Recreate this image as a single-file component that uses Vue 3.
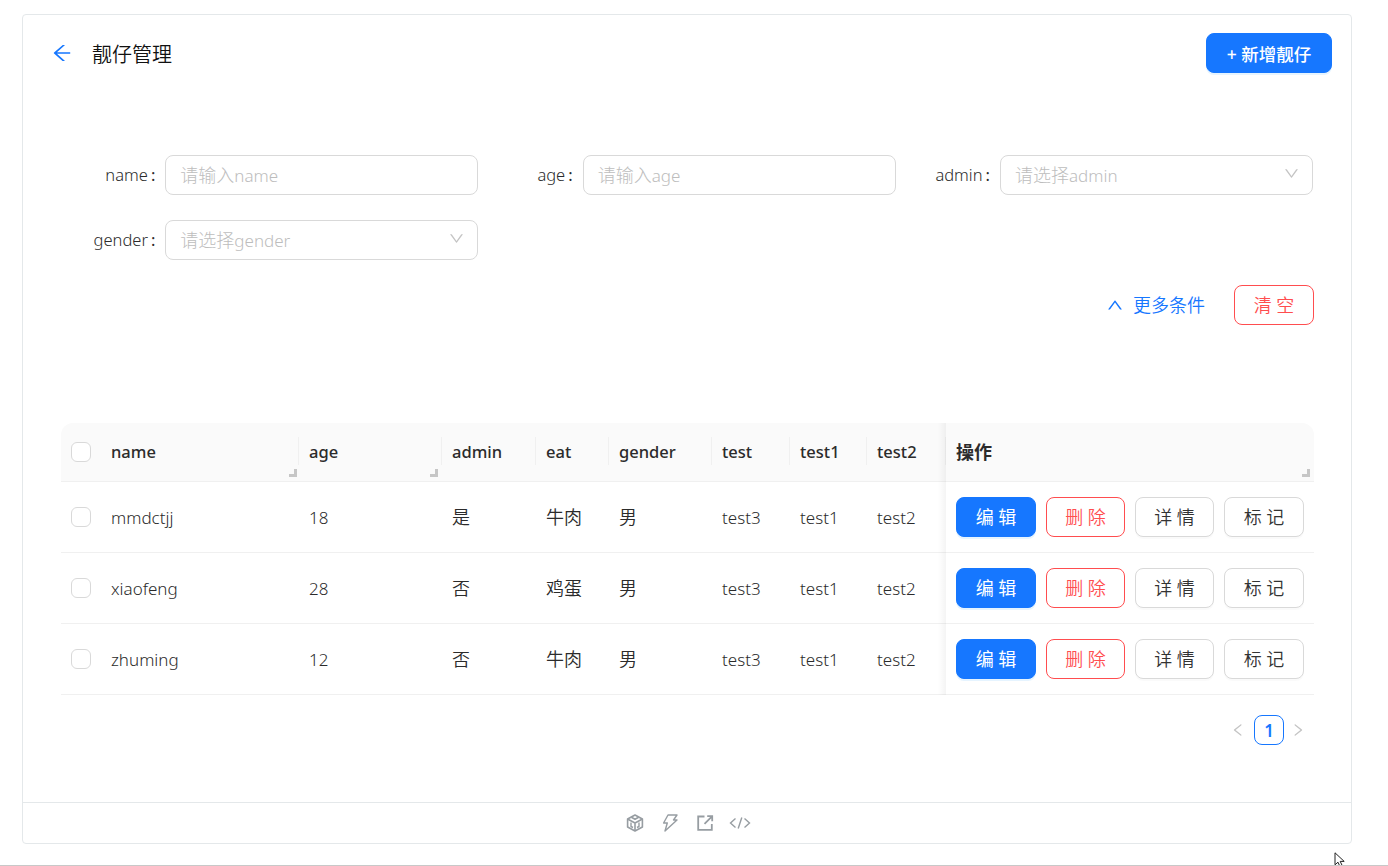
<script setup>
const columns = ['name', 'age', 'admin', 'eat', 'gender', 'test', 'test1', 'test2']
const rows = [
  ['mmdctjj', '18', '是', '牛肉', '男', 'test3', 'test1', 'test2'],
  ['xiaofeng', '28', '否', '鸡蛋', '男', 'test3', 'test1', 'test2'],
  ['zhuming', '12', '否', '牛肉', '男', 'test3', 'test1', 'test2']
]
const fields = [
  { label: 'name', verb: '请输入', word: 'name' },
  { label: 'age', verb: '请输入', word: 'age' },
  { label: 'admin', verb: '请选择', word: 'admin', select: true },
  { label: 'gender', verb: '请选择', word: 'gender', select: true }
]
const isCjk = (v) => /[\u4e00-\u9fff]/.test(v)
const downPath = 'M884 256h-75c-5.1 0-9.9 2.5-12.9 6.6L512 654.2 227.9 262.6c-3-4.1-7.8-6.6-12.9-6.6h-75c-6.5 0-10.3 7.4-6.5 12.7l352.6 486.1c12.8 17.6 39 17.6 51.7 0l352.6-486.1c3.9-5.3.1-12.7-6.4-12.7z'
</script>

<template>
  <div class="page">
    <div class="card">
      <div class="card-body">
        <header class="head">
          <div class="title">
            <svg class="back" viewBox="64 64 896 896" fill="currentColor"><path d="M872 474H286.9l350.2-304c5.6-4.9 2.2-14-5.2-14h-88.5c-3.9 0-7.6 1.4-10.5 3.9L155 487.8a31.96 31.96 0 0 0 0 48.3L535.1 866c1.5 1.3 3.3 2 5.2 2h91.5c7.4 0 10.8-9.2 5.2-14L286.9 550H872c4.4 0 8-3.6 8-8v-60c0-4.4-3.6-8-8-8z"/></svg>
            <span>靓仔管理</span>
          </div>
          <button class="btn primary add">+ 新增靓仔</button>
        </header>

        <section class="form">
          <div v-for="f in fields" :key="f.label" class="field">
            <label class="label">{{ f.label }}<span class="colon">:</span></label>
            <div class="control">
              <span class="placeholder"><span class="cjk">{{ f.verb }}</span>{{ f.word }}</span>
              <svg v-if="f.select" class="arrow" viewBox="64 64 896 896" fill="currentColor"><path :d="downPath"/></svg>
            </div>
          </div>
        </section>

        <div class="actions">
          <a class="more">
            <svg class="up" viewBox="64 64 896 896" fill="currentColor"><path d="M890.5 755.3L537.9 269.2c-12.8-17.6-39-17.6-51.7 0L133.5 755.3A8 8 0 0 0 140 768h75c5.1 0 9.9-2.5 12.9-6.6L512 369.8l284.1 391.6c3 4.1 7.8 6.6 12.9 6.6h75c6.5 0 10.3-7.4 6.5-12.7z"/></svg>
            更多条件
          </a>
          <button class="btn danger clear">清 空</button>
        </div>

        <section class="table">
          <div class="row thead">
            <div class="cell check"><span class="box"></span></div>
            <div v-for="c in columns" :key="c" class="cell th">
              <span class="txt">{{ c }}</span>
              <i v-if="c === 'name'" class="grip"></i>
              <i v-if="c === 'age'" class="grip inset"></i>
            </div>
            <div class="cell op th"><span class="txt cjk">操作</span><i class="grip inset"></i></div>
          </div>
          <div v-for="r in rows" :key="r[0]" class="row tbody">
            <div class="cell check"><span class="box"></span></div>
            <div v-for="(v, i) in r" :key="i" class="cell">
              <span class="txt" :class="{ cjk: isCjk(v) }">{{ v }}</span>
            </div>
            <div class="cell op ops">
              <button class="btn primary small w80">编 辑</button>
              <button class="btn danger small w79">删 除</button>
              <button class="btn plain small w79">详 情</button>
              <button class="btn plain small w80">标 记</button>
            </div>
          </div>
        </section>

        <nav class="pager">
          <svg class="pg prev" viewBox="64 64 896 896" fill="currentColor"><path d="M724 218.3V141c0-6.7-7.7-10.4-12.9-6.3L260.3 486.8a31.86 31.86 0 0 0 0 50.3l450.8 352.1c5.3 4.1 12.9.4 12.9-6.3v-77.3c0-4.9-2.3-9.6-6.1-12.6l-360-281 360-281.1c3.8-3 6.1-7.7 6.1-12.6z"/></svg>
          <span class="page-no">1</span>
          <svg class="pg" viewBox="64 64 896 896" fill="currentColor"><path d="M765.7 486.8L314.9 134.7A7.97 7.97 0 0 0 302 141v77.3c0 4.9 2.3 9.6 6.1 12.6l360 281.1-360 281.1c-3.9 3-6.1 7.7-6.1 12.6V883c0 6.7 7.7 10.4 12.9 6.3l450.8-352.1a31.96 31.96 0 0 0 0-50.4z"/></svg>
        </nav>
      </div>

      <footer class="foot">
        <svg class="ic" viewBox="0 0 18 18" fill="none" stroke="currentColor" stroke-width="1.6" stroke-linejoin="round"><path d="M9 1 16.4 5v8L9 17l-7.4-4V5z"/><path d="M5.4 3.2 9 5.2l3.6-2M9 9v8M2 5.2 9 9l7-3.8"/><path d="M5 8.5v4l2 1M13 8.5v4l-2 1" stroke-width="1.4"/></svg>
        <svg class="ic" viewBox="0 0 18 18" fill="none" stroke="currentColor" stroke-width="1.4" stroke-linejoin="round"><path d="M7 1h9l-3.5 5H16L4 17l2.3-8H2.6z"/></svg>
        <svg class="ic" viewBox="0 0 18 18" fill="none" stroke="currentColor" stroke-width="1.8"><path d="M8.5 2.5H2.2v13.3h13.6V10"/><path d="M8.5 9.8 15.5 2.8M11.2 2.2h5v5"/></svg>
        <svg class="ic wide" viewBox="0 0 22 18" fill="none" stroke="currentColor" stroke-width="1.4"><path d="M6.5 4.5 1.5 9l5 4.5M15.5 4.5l5 4.5-5 4.5M12.8 3.5 9.2 14.5"/></svg>
      </footer>
    </div>
    <svg class="cursor" viewBox="0 0 13 16"><path d="M1 .8v12l3-2.6 1.8 4 2.2-1-1.8-3.8h4z" fill="#fff" stroke="#222" stroke-width="1"/></svg>
  </div>
</template>

<style>
html, body { margin: 0; background: #fff; overflow: hidden; }
</style>

<style scoped>
.page {
  position: relative;
  box-sizing: border-box;
  height: 866px;
  padding: 14px 36px 0 22px;
  border-bottom: 1px solid #c8c8c8;
  font-family: "Noto Sans", "Open Sans", "Noto Sans CJK SC", sans-serif;
  font-size: 18px;
  color: #2b2b2b;
  overflow: hidden;
}
.card {
  box-sizing: border-box;
  height: 830px;
  border: 1px solid #e4e8ea;
  border-radius: 4px;
  display: flex;
  flex-direction: column;
}
.card-body { flex: 1; padding: 18px 38px 0 28px; }
.head {
  display: flex;
  justify-content: space-between;
  align-items: center;
  height: 40px;
  margin-right: -19px;
}
.title { display: flex; align-items: center; color: #111; font-size: 20px; font-weight: 350; }
.back { width: 20px; height: 20px; color: #1677ff; margin-right: 20px; margin-left: 1px; }
.btn {
  box-sizing: border-box;
  font-family: inherit;
  height: 40px;
  border-radius: 8px;
  padding: 0 0 2px;
  font-size: 18px;
  font-weight: 350;
  background: #fff;
  cursor: pointer;
}
.primary {
  background: #1677ff;
  border: 1px solid #1677ff;
  color: #fff;
  font-weight: 400;
  box-shadow: 0 2px 0 rgba(5, 145, 255, .1);
}
.danger { border: 1px solid #ff4d4f; color: #ff4d4f; }
.plain {
  border: 1px solid #d9d9d9;
  color: #333;
  box-shadow: 0 2px 0 rgba(0, 0, 0, .02);
}
.add { width: 126px; font-size: 17.5px; font-weight: 500; padding-bottom: 0; }
.form {
  display: grid;
  grid-template-columns: repeat(3, 417.33px);
  row-gap: 25px;
  margin: 82px 0 0 10px;
}
.field { display: flex; align-items: center; height: 40px; }
.label {
  box-sizing: border-box;
  width: 104.33px;
  padding: 0 10px 1px 0;
  text-align: right;
  font-size: 16.5px;
  font-weight: 300;
  white-space: nowrap;
}
.colon { margin-left: 3px; font-weight: 400; }
.control {
  box-sizing: border-box;
  width: 313px;
  height: 40px;
  border: 1px solid #d9d9d9;
  border-radius: 8px;
  padding: 0 15px 0 14px;
  display: flex;
  align-items: center;
  justify-content: space-between;
}
.placeholder { color: #bdbdbd; font-size: 17px; font-weight: 300; padding-bottom: 2px; }
.cjk { font-size: 18px; font-weight: 350; }
.placeholder .cjk { font-weight: 300; }
.arrow { width: 15px; height: 15px; color: #c4c4c4; margin: -3px -2px 0 0; }
.actions {
  display: flex;
  justify-content: flex-end;
  align-items: center;
  margin-top: 25px;
  height: 40px;
  margin-right: -1px;
}
.more { display: flex; align-items: center; color: #1677ff; font-weight: 350; font-size: 18px; margin-right: 29px; padding-bottom: 2px; }
.up { width: 16px; height: 16px; margin: 2px 10px 0 1px; }
.clear { width: 80px; }
.table { margin: 98px -1px 0 10px; }
.row {
  display: grid;
  grid-template-columns: 40px 198px 143px 94px 73px 103px 78px 77px 79px 368px;
  align-items: stretch;
  border-bottom: 1px solid #f0f0f0;
}
.thead {
  height: 59px;
  box-sizing: border-box;
  background: #fafafa;
  border-radius: 12px 12px 0 0;
  font-weight: 500;
  font-size: 16.5px;
}
.tbody { height: 71px; box-sizing: border-box; font-weight: 300; font-size: 17px; }
.cell {
  position: relative;
  display: flex;
  align-items: center;
  padding-left: 10px;
  white-space: nowrap;
  min-width: 0;
}
.txt { padding-bottom: 2px; }
.tbody .txt { padding-bottom: 0; }
.tbody .cjk { padding-bottom: 2px; }
.thead .cjk { font-weight: 700; }
.th::before {
  content: "";
  position: absolute;
  left: -1px;
  top: 14px;
  height: 28px;
  width: 1px;
  background: #f0f0f0;
}
.thead .cell:nth-child(2)::before { display: none; }
.box {
  box-sizing: border-box;
  width: 20px;
  height: 20px;
  border: 1px solid #d9d9d9;
  border-radius: 6px;
  background: #fff;
}
.grip {
  position: absolute;
  right: 2px;
  bottom: 4px;
  width: 8px;
  height: 8px;
  border-right: 3px solid #c6c6c6;
  border-bottom: 3px solid #c6c6c6;
  box-sizing: border-box;
}
.inset { right: 4px; }
.op::after {
  content: "";
  position: absolute;
  left: -8px;
  top: 0;
  bottom: -1px;
  width: 8px;
  background: linear-gradient(to left, rgba(0, 0, 0, .045), rgba(0, 0, 0, 0));
  pointer-events: none;
}
.ops { gap: 10px; background: #fff; }
.small { flex: none; }
.w80 { width: 80px; }
.w79 { width: 79px; }
.pager {
  display: flex;
  justify-content: flex-end;
  align-items: center;
  gap: 7px;
  margin: 20px 8px 0 0;
  height: 30px;
}
.pg { width: 14px; height: 14px; color: #c4c4c4; }
.prev { margin-right: 2px; }
.page-no {
  box-sizing: border-box;
  width: 30px;
  height: 30px;
  border: 1px solid #1677ff;
  border-radius: 8px;
  color: #1677ff;
  font-size: 17px;
  font-weight: 600;
  display: flex;
  align-items: center;
  justify-content: center;
}
.foot {
  height: 41px;
  box-sizing: border-box;
  padding-left: 2px;
  border-top: 1px solid #e4e8ea;
  display: flex;
  justify-content: center;
  align-items: center;
  gap: 17px;
  color: #979da2;
}
.ic { width: 18px; height: 18px; }
.wide { width: 22px; margin-left: -2px; }
.cursor { position: absolute; left: 1334px; top: 852px; width: 13px; height: 16px; }
</style>
